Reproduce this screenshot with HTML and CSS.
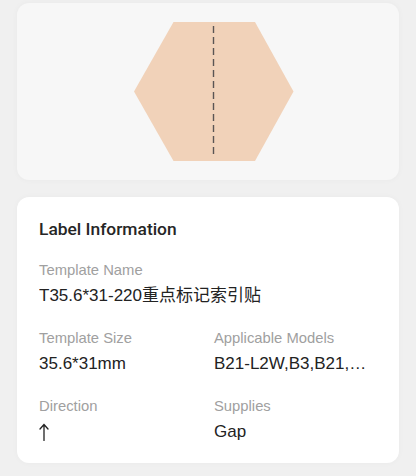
FILE: index.html
```html
<!DOCTYPE html>
<html lang="en">
<head>
<meta charset="utf-8">
<title>Label Information</title>
<link rel="stylesheet" href="styles.css">
</head>
<body>
<div class="page">
  <div class="preview-card">
    <svg class="preview-svg" width="382" height="177" viewBox="0 0 382 177" xmlns="http://www.w3.org/2000/svg">
      <polygon points="117,88.5 156.5,19 238,19 276.5,88.5 238,158 156.5,158" fill="#f1d2b9"/>
      <line x1="196.5" y1="23" x2="196.5" y2="154" stroke="#5b5554" stroke-width="1.4" stroke-dasharray="7 4"/>
    </svg>
  </div>
  <div class="info-card">
    <div class="info-title">Label Information</div>
    <div class="info-item full">
      <div class="info-label">Template Name</div>
      <div class="info-value">T35.6*31-220重点标记索引贴</div>
    </div>
    <div class="info-grid">
      <div class="info-item">
        <div class="info-label">Template Size</div>
        <div class="info-value">35.6*31mm</div>
      </div>
      <div class="info-item">
        <div class="info-label">Applicable Models</div>
        <div class="info-value">B21-L2W,B3,B21,…</div>
      </div>
      <div class="info-item">
        <div class="info-label">Direction</div>
        <div class="info-value"><svg class="dir-arrow" width="10" height="18" viewBox="0 0 10 18" xmlns="http://www.w3.org/2000/svg" aria-label="↑"><path d="M5 1.5 V17.5 M1 6 L5 1.5 L9 6" fill="none" stroke="#222" stroke-width="1.3" stroke-linecap="round" stroke-linejoin="round"/></svg></div>
      </div>
      <div class="info-item">
        <div class="info-label">Supplies</div>
        <div class="info-value">Gap</div>
      </div>
    </div>
  </div>
</div>
</body>
</html>
```

FILE: styles.css
```css
html, body {
  margin: 0;
  padding: 0;
  background: #f0f0f0;
}

body {
  font-family: "Liberation Sans", "Noto Sans CJK SC", sans-serif;
  width: 416px;
  height: 476px;
  overflow: hidden;
}

.page {
  padding: 3px 17px 0 17px;
  display: flex;
  flex-direction: column;
  gap: 17px;
}

.preview-card {
  height: 177px;
  background: #f7f7f7;
  border-radius: 12px;
  box-shadow: 0 0 6px rgba(0, 0, 0, 0.035);
  overflow: hidden;
}

.preview-svg {
  display: block;
}

.info-card {
  background: #ffffff;
  border-radius: 12px;
  padding: 20px 22px 19px 22px;
  box-shadow: 0 0 6px rgba(0, 0, 0, 0.03);
}

.info-title {
  font-family: Roboto, "Liberation Sans", sans-serif;
  font-size: 17.4px;
  font-weight: 500;
  line-height: 24px;
  color: #262626;
  margin-bottom: 18.5px;
}

.info-item {
  display: flex;
  flex-direction: column;
  gap: 4px;
  min-width: 0;
}

.info-item.full {
  margin-bottom: 20px;
}

.info-grid {
  display: grid;
  grid-template-columns: 163px 163px;
  column-gap: 12px;
  row-gap: 20px;
}

.info-label {
  font-size: 14.8px;
  line-height: 20px;
  color: #a0a0a0;
  white-space: nowrap;
}

.info-value {
  font-size: 17px;
  line-height: 24px;
  height: 24px;
  color: #222222;
  white-space: nowrap;
  overflow: hidden;
}

.dir-arrow {
  display: block;
  margin-top: 3px;
}
```
